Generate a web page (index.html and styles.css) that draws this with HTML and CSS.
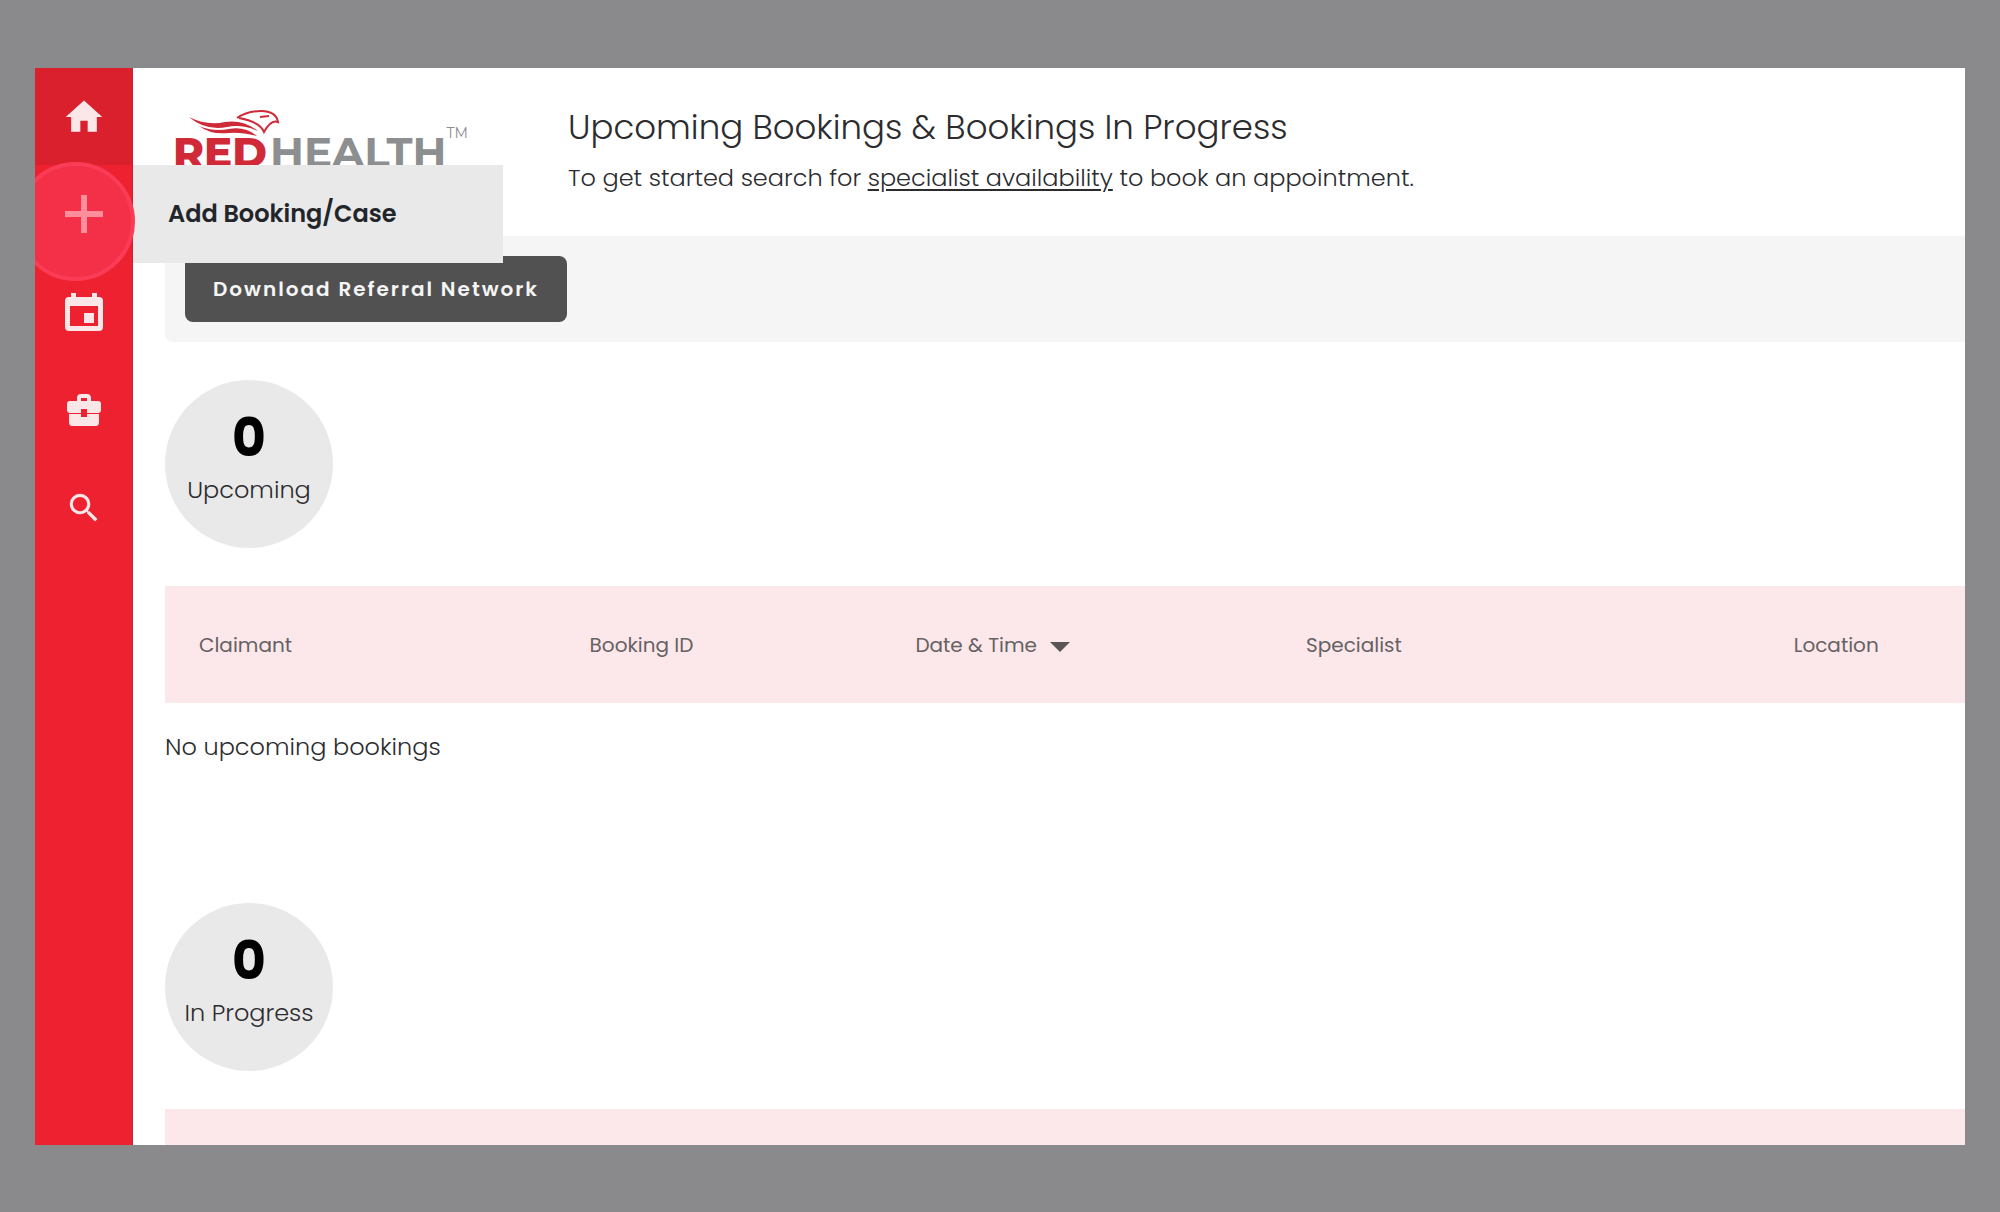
FILE: index.html
```html
<!DOCTYPE html>
<html lang="en">
  <head>
    <meta charset="UTF-8" />
    <meta name="viewport" content="width=device-width, initial-scale=1.0" />
    <title>RedHealth - Bookings</title>
    <link rel="stylesheet" href="styles.css">
  </head>
  <body>
    <div class="app">
      <nav class="sidebar">
        <a class="nav-item active" href="#home" aria-label="Home">
          <svg width="44" height="44" viewBox="0 0 24 24"><path d="M10 20v-6h4v6h5v-8h3L12 3 2 12h3v8z" /></svg>
        </a>
        <a class="nav-item add" href="#add" aria-label="Add booking or case">
          <span class="pulse"></span>
          <svg class="plus" width="38" height="38" viewBox="0 0 38 38"><path d="M16 0h6v16h16v6H22v16h-6V22H0v-6h16z" /></svg>
          <span class="flyout">Add Booking/Case</span>
        </a>
        <a class="nav-item" href="#calendar" aria-label="Calendar">
          <svg width="38" height="38" viewBox="0 0 38 38"><path fill-rule="evenodd" d="M6 0h5v4h16V0h5v4h2q4 0 4 4v26q0 4-4 4H4q-4 0-4-4V8q0-4 4-4h2zM5 13v20h28V13zM19 20h10v10H19z" /></svg>
        </a>
        <a class="nav-item" href="#cases" aria-label="Cases">
          <svg width="34" height="32" viewBox="0 0 34 32"><path fill-rule="evenodd" d="M3 7h7V4q0-4 4-4h6q4 0 4 4v3h7q3 0 3 3v6q0 3-3 3H20v-4h-6v4H3q-3 0-3-3v-6q0-3 3-3zm11 0h6V4h-6zM2 20h12v3h6v-3h12v8q0 4-3 4H5q-3 0-3-4z" /></svg>
        </a>
        <a class="nav-item" href="#search" aria-label="Search">
          <svg width="38" height="38" viewBox="0 0 24 24"><path d="M15.500 14h-.79l-.28-.27A6.471 6.471 0 0 0 16 9.500 6.500 6.500 0 1 0 9.500 16c1.610 0 3.090-.59 4.230-1.570l.27.28v.79l5 4.990L20.490 19zm-6 0C7.010 14 5 11.990 5 9.500S7.010 5 9.500 5 14 7.010 14 9.500 11.990 14 9.500 14z" /></svg>
        </a>
      </nav>

      <main class="content">
        <header class="page-header">
          <div class="logo">
            <svg class="bird" width="98" height="28" viewBox="0 0 98 28">
              <path d="M2 9Q20 18 38 14Q56 11 71 23Q55 16 40 19Q18 23 2 9Z" />
              <path d="M12 18Q26 24 42 21Q58 18 70 28Q54 24 42 25Q24 27 12 18Z" />
              <path class="line" d="M50 10Q60 3 74 3Q89 3 91 14Q84 11 77 24Q73 14 52 10M73 9L82 8" />
            </svg>
            <div class="logo-text"><span class="red">RED</span>HEALTH<span class="tm">TM</span></div>
          </div>
          <div>
            <h1>Upcoming Bookings &amp; Bookings In Progress</h1>
            <p>To get started search for <a href="#specialists">specialist availability</a> to book an appointment.</p>
          </div>
        </header>

        <div class="toolbar">
          <button type="button">Download Referral Network</button>
        </div>

        <section class="bookings">
          <h2 class="count"><strong>0</strong>Upcoming</h2>
          <table>
            <thead>
              <tr>
                <th class="claimant">Claimant</th>
                <th class="booking-id">Booking ID</th>
                <th class="date">Date &amp; Time <span class="sort"></span></th>
                <th class="specialist">Specialist</th>
                <th>Location</th>
              </tr>
            </thead>
          </table>
          <p class="empty">No upcoming bookings</p>
        </section>

        <section class="bookings">
          <h2 class="count"><strong>0</strong>In Progress</h2>
          <table>
            <thead>
              <tr>
                <th></th>
              </tr>
            </thead>
          </table>
        </section>
      </main>
    </div>
  </body>
</html>
```
FILE: styles.css
```css
* {
  box-sizing: border-box;
}
body {
  margin: 0;
  height: 100vh;
  padding: 68px 35px 67px;
  background-color: #8a8a8c;
  font-family: Poppins, Inter, sans-serif;
  font-size: 24px;
  line-height: 32px;
  color: #2c2c2f;
}
h1,
h2,
p {
  margin: 0;
  font-weight: 300;
}
.app {
  display: flex;
  height: 100%;
  overflow: hidden;
  position: relative;
  background-color: #fff;
}

/* sidebar */
.sidebar {
  flex: none;
  width: 98px;
  background-color: #ee2130;
  border-right: 1px solid #c8203a;
  position: relative;
  z-index: 1;
}
.nav-item {
  display: flex;
  align-items: center;
  justify-content: center;
  height: 98px;
  position: relative;
  fill: #fbe6e8;
}
.nav-item.active {
  height: 97px;
  background-color: #da202c;
}
.nav-item.add {
  color: #222529;
  fill: #ff8e9c;
  text-decoration: none;
}
.pulse {
  position: absolute;
  z-index: 1;
  top: -3px;
  left: -19px;
  width: 119px;
  height: 119px;
  border: 4px solid #fb3c56;
  border-radius: 50%;
  background-color: #f43048;
}
.plus {
  position: relative;
  z-index: 2;
}
.flyout {
  position: absolute;
  top: 0;
  left: 98px;
  width: 370px;
  height: 98px;
  padding: 0 35px;
  line-height: 98px;
  font-size: 24px;
  font-weight: 600;
  background-color: #e9e9e9;
}

/* main area */
.content {
  flex: 1;
  min-width: 0;
  padding-left: 32px;
}
.page-header {
  display: flex;
  height: 168px;
  padding: 40px 0 0 8px;
}
.page-header h1 {
  font-size: 34px;
  line-height: 38px;
  margin-bottom: 16px;
}
.page-header a {
  color: inherit;
  text-underline-offset: 3px;
}
.logo {
  flex: none;
  width: 395px;
}
.bird {
  display: block;
  margin-left: 14px;
  fill: #cf2a38;
}
.bird .line {
  fill: none;
  stroke: #cf2a38;
  stroke-width: 2;
}
.logo-text {
  display: flex;
  font-family: Montserrat, Poppins, sans-serif;
  font-size: 42px;
  line-height: 32px;
  font-weight: 700;
  color: #8d8e90;
}
.logo-text .red {
  margin-right: 3px;
  color: #d02a38;
  font-weight: 800;
}
.tm {
  margin-top: -10px;
  font-size: 14px;
  font-weight: 400;
  line-height: 1;
}
.toolbar {
  padding: 20px;
  background-color: #f5f5f5;
  border-radius: 8px 0 0 8px;
}
.toolbar button {
  display: block;
  height: 66px;
  padding: 0 28px;
  border: 0;
  border-radius: 8px;
  background-color: #515151;
  color: #f5f5f5;
  font-family: inherit;
  font-size: 20px;
  font-weight: 600;
  letter-spacing: 2px;
}

/* booking lists */
.bookings {
  padding-top: 38px;
  margin-bottom: 102px;
}
.count {
  display: flex;
  flex-direction: column;
  align-items: center;
  width: 168px;
  height: 168px;
  padding-top: 32px;
  margin-bottom: 38px;
  border-radius: 50%;
  background-color: #e9e9e9;
  font-size: 24px;
}
.count strong {
  font-size: 52px;
  line-height: 52px;
  margin-bottom: 10px;
  color: #000;
  font-weight: 700;
}
table {
  width: 100%;
  table-layout: fixed;
  border-collapse: collapse;
}
th {
  height: 117px;
  padding: 0 0 0 34px;
  background-color: #fce8ea;
  color: #666163;
  font-size: 20px;
  font-weight: 400;
  text-align: left;
}
.claimant,
.date {
  width: 21.7%;
}
.booking-id {
  width: 18.1%;
}
.specialist {
  width: 27.1%;
}
.sort {
  display: inline-block;
  margin-left: 8px;
  border: 10px solid transparent;
  border-top-color: #5a5557;
  border-bottom: 0;
}
.empty {
  padding-top: 28px;
}
```
